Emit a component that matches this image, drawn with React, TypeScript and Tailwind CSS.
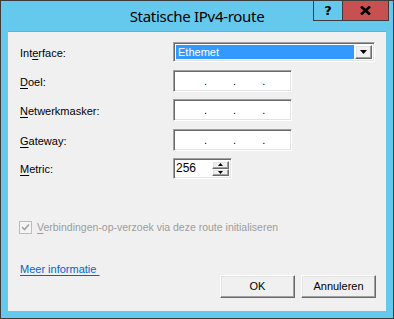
import React from "react";

const sunken =
  "border border-t-[#a0a0a0] border-l-[#a0a0a0] border-b-white border-r-white shadow-[inset_1px_1px_0_#696969,inset_-1px_-1px_0_#e3e3e3]";
const raised =
  "border border-t-white border-l-white border-b-[#696969] border-r-[#696969] shadow-[inset_-1px_-1px_0_#a0a0a0,inset_1px_1px_0_#e3e3e3]";

function Label({ text, ul }: { text: string; ul: number }) {
  return (
    <div className="w-[153px] shrink-0 text-black pt-[2px]">
      {text.slice(0, ul)}
      <span className="underline underline-offset-2">{text[ul]}</span>
      {text.slice(ul + 1)}
    </div>
  );
}

function IpField() {
  return (
    <div className={`w-[119px] h-[22px] bg-white flex items-center pt-[1px] ${sunken}`}>
      <span className="w-[30px]" />
      <span>.</span>
      <span className="w-[26px]" />
      <span>.</span>
      <span className="w-[26px]" />
      <span>.</span>
    </div>
  );
}

function Tri({ up }: { up?: boolean }) {
  return (
    <svg width="5" height="3" viewBox="0 0 5 3">
      <path d={up ? "M2.5 0 L5 3 L0 3 Z" : "M0 0 L5 0 L2.5 3 Z"} fill="#000" />
    </svg>
  );
}

export default function App() {
  return (
    <div className="w-[394px] h-[319px] bg-[#65c9ed] border border-[#3c3c3c] flex flex-col relative font-['Liberation_Sans',Arial,sans-serif] text-[11px] leading-[13px]">
      {/* title bar */}
      <div className="h-[30px] shrink-0 flex items-center justify-center">
        <span className="font-['Noto_Sans',sans-serif] text-[15px] leading-[18px] text-black tracking-[-0.3px]">
          Statische IPv4-route
        </span>
      </div>
      <div className="absolute top-0 right-[4px] flex h-[20px]">
        <div className="w-[29px] border-l border-b border-[#3c3c3c] flex items-center justify-center font-bold text-[13px] font-['DejaVu_Sans',sans-serif] text-black">
          ?
        </div>
        <div className="w-[47px] bg-[#c75050] border-l border-r border-b border-[#3c3c3c] flex items-center justify-center">
          <svg width="11" height="9" viewBox="0 0 11 9">
            <path d="M1 0.5 L10 8.5 M10 0.5 L1 8.5" stroke="#000" strokeWidth="2.6" />
          </svg>
        </div>
      </div>

      {/* client area */}
      <div className="mx-[7px] mb-[7px] flex-1 bg-[#f0f0f0] border-t border-[#5fb4d6] flex flex-col pl-[12px] pr-[10px]">
        <div className="mt-[10px] flex items-center h-[20px]">
          <Label text="Interface:" ul={3} />
          <div className={`w-[202px] h-[20px] bg-white flex p-[2px] ${sunken}`}>
            <div className="flex-1 bg-[#3399ff] text-white pl-[2px] flex items-center">
              Ethemet
            </div>
            <div className={`w-[17px] ml-[1px] bg-[#f0f0f0] flex items-center justify-center ${raised}`}>
              <svg width="7" height="4" viewBox="0 0 7 4">
                <path d="M0 0 L7 0 L3.5 4 Z" fill="#000" />
              </svg>
            </div>
          </div>
        </div>

        <div className="mt-[8px] flex items-center h-[22px]">
          <Label text="Doel:" ul={0} />
          <IpField />
        </div>
        <div className="mt-[7px] flex items-center h-[22px]">
          <Label text="Netwerkmasker:" ul={0} />
          <IpField />
        </div>
        <div className="mt-[8px] flex items-center h-[22px]">
          <Label text="Gateway:" ul={0} />
          <IpField />
        </div>
        <div className="mt-[7px] flex items-center h-[21px]">
          <Label text="Metric:" ul={0} />
          <div className={`w-[59px] h-[21px] bg-white flex items-center p-[2px] ${sunken}`}>
            <div className="flex-1 text-[12px] leading-[15px] text-black">256</div>
            <div className="w-[17px] h-full flex flex-col">
              <div className={`flex-1 bg-[#f0f0f0] flex items-center justify-center ${raised}`}>
                <Tri up />
              </div>
              <div className={`flex-1 bg-[#f0f0f0] flex items-center justify-center ${raised}`}>
                <Tri />
              </div>
            </div>
          </div>
        </div>

        <div className="mt-[42px] -ml-[1px] flex items-center h-[13px]">
          <div className="w-[13px] h-[13px] border border-[#bcbcbc] bg-[#f4f4f4] flex items-center justify-center">
            <svg width="9" height="9" viewBox="0 0 9 9">
              <path d="M1 4 L3.5 6.5 L8 1.5" stroke="#a0a0a0" strokeWidth="1.6" fill="none" />
            </svg>
          </div>
          <span className="ml-[5px] text-[#9d9d9d] text-[10.5px]">
            <span className="underline underline-offset-2">V</span>erbindingen-op-verzoek via deze route initialiseren
          </span>
        </div>

        <div className="flex justify-between items-start mt-[29px]">
          <a className="text-[#0066cc] underline underline-offset-2 cursor-pointer">Meer informatie&nbsp;</a>
          <div className="pt-[12px] flex gap-[6px]">
            <button className={`w-[75px] h-[23px] bg-[#f0f0f0] text-black text-[11px] ${raised}`}>OK</button>
            <button className={`w-[75px] h-[23px] bg-[#f0f0f0] text-black text-[11px] ${raised}`}>Annuleren</button>
          </div>
        </div>
      </div>
    </div>
  );
}
